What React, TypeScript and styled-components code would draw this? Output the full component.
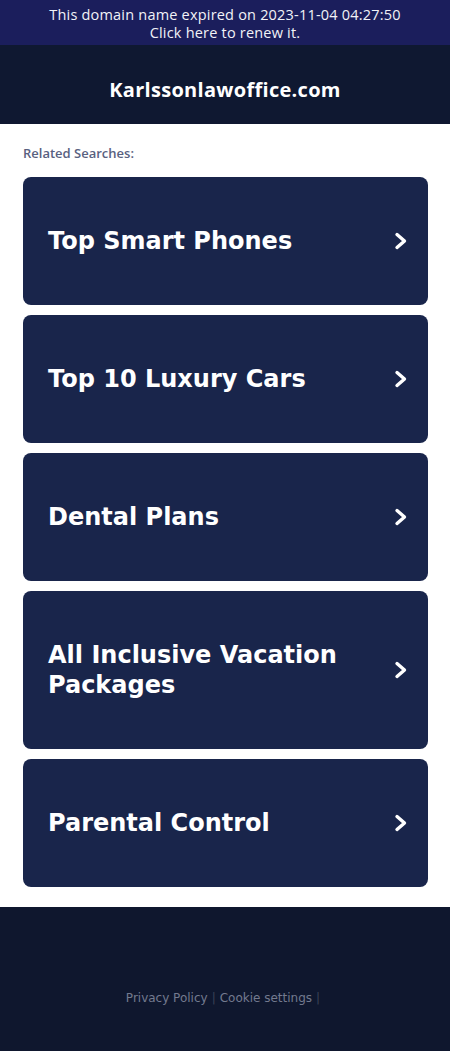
import React from "react";
import styled, { createGlobalStyle } from "styled-components";

const Global = createGlobalStyle`
  html, body { margin: 0; padding: 0; background: #ffffff; }
  * { box-sizing: border-box; }
`;

const Page = styled.div`
  width: 450px;
  display: flex;
  flex-direction: column;
`;

const Banner = styled.a`
  display: block;
  height: 45px;
  padding-top: 6px;
  background: #1b1e5c;
  color: #f2f2f7;
  text-align: center;
  text-decoration: none;
  font-family: "Open Sans", "Noto Sans", sans-serif;
  font-size: 14.5px;
  font-weight: 500;
  line-height: 18px;
  letter-spacing: 0.2px;
`;

const Header = styled.header`
  height: 79px;
  padding-top: 10px;
  background: #0f1831;
  display: flex;
  align-items: center;
  justify-content: center;
`;

const Domain = styled.h1`
  margin: 0;
  color: #ffffff;
  font-family: "Open Sans", "Noto Sans", sans-serif;
  font-size: 20px;
  font-weight: 700;
  letter-spacing: 0.3px;
`;

const Main = styled.main`
  padding: 21px 22px 20px 23px;
  display: flex;
  flex-direction: column;
`;

const Related = styled.div`
  font-family: "Open Sans", "Noto Sans", sans-serif;
  font-size: 13px;
  font-weight: 600;
  color: #59617f;
  line-height: 16px;
  margin-bottom: 16px;
`;

const List = styled.div`
  display: flex;
  flex-direction: column;
  gap: 10px;
`;

const Card = styled.a`
  display: flex;
  align-items: center;
  justify-content: space-between;
  gap: 16px;
  padding: 49px 20px 49px 25px;
  background: #19254b;
  border-radius: 8px;
  text-decoration: none;
`;

const CardTitle = styled.span`
  color: #ffffff;
  font-family: "DejaVu Sans", sans-serif;
  font-weight: 700;
  font-size: 24px;
  line-height: 30px;
`;

const Chevron = styled.svg`
  flex: none;
  width: 14px;
  height: 18px;
`;

const Footer = styled.footer`
  height: 144px;
  background: #0f172e;
  display: flex;
  align-items: center;
  justify-content: center;
  padding-top: 37px;
  font-family: "DejaVu Sans", sans-serif;
  font-size: 12px;
`;

const FooterLink = styled.a`
  color: #737a8e;
  text-decoration: none;
`;

const Sep = styled.span`
  color: #3b4257;
  margin: 0 4px;
`;

const items = [
  "Top Smart Phones",
  "Top 10 Luxury Cars",
  "Dental Plans",
  "All Inclusive Vacation Packages",
  "Parental Control",
];

export default function App() {
  return (
    <Page>
      <Global />
      <Banner href="#">
        This domain name expired on 2023-11-04 04:27:50
        <br />
        Click here to renew it.
      </Banner>
      <Header>
        <Domain>Karlssonlawoffice.com</Domain>
      </Header>
      <Main>
        <Related>Related Searches:</Related>
        <List>
          {items.map((t) => (
            <Card href="#" key={t}>
              <CardTitle>{t}</CardTitle>
              <Chevron viewBox="0 0 14 18">
                <path
                  d="M3 2.5 L10.5 9 L3 15.5"
                  fill="none"
                  stroke="#ffffff"
                  strokeWidth="3.4"
                  strokeLinecap="round"
                  strokeLinejoin="round"
                />
              </Chevron>
            </Card>
          ))}
        </List>
      </Main>
      <Footer>
        <FooterLink href="#">Privacy Policy</FooterLink>
        <Sep>|</Sep>
        <FooterLink href="#">Cookie settings</FooterLink>
        <Sep>|</Sep>
      </Footer>
    </Page>
  );
}
